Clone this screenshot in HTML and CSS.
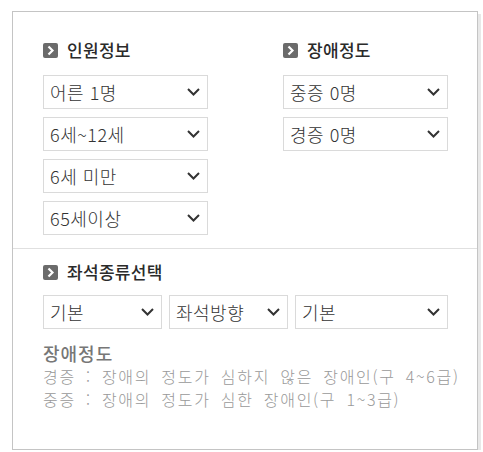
FILE: index.html
```html
<!DOCTYPE html>
<html lang="ko">
<head>
<meta charset="utf-8">
<link rel="stylesheet" href="styles.css">
</head>
<body>
<div class="panel">
  <div class="top">
    <div class="col">
      <h3 class="heading"><span class="ico"><svg viewBox="0 0 15 15" width="15" height="15"><path d="M5.5 3.5 L9.5 7.5 L5.5 11.5" fill="none" stroke="#fff" stroke-width="2.2"/></svg></span>인원정보</h3>
      <div class="sel"><span>어른 1명</span><svg class="chev" viewBox="0 0 13 8" width="13" height="8"><path d="M1 1 L6.5 6.5 L12 1" fill="none" stroke="#333" stroke-width="2"/></svg></div>
      <div class="sel"><span>6세~12세</span><svg class="chev" viewBox="0 0 13 8" width="13" height="8"><path d="M1 1 L6.5 6.5 L12 1" fill="none" stroke="#333" stroke-width="2"/></svg></div>
      <div class="sel"><span>6세 미만</span><svg class="chev" viewBox="0 0 13 8" width="13" height="8"><path d="M1 1 L6.5 6.5 L12 1" fill="none" stroke="#333" stroke-width="2"/></svg></div>
      <div class="sel"><span>65세이상</span><svg class="chev" viewBox="0 0 13 8" width="13" height="8"><path d="M1 1 L6.5 6.5 L12 1" fill="none" stroke="#333" stroke-width="2"/></svg></div>
    </div>
    <div class="col">
      <h3 class="heading"><span class="ico"><svg viewBox="0 0 15 15" width="15" height="15"><path d="M5.5 3.5 L9.5 7.5 L5.5 11.5" fill="none" stroke="#fff" stroke-width="2.2"/></svg></span>장애정도</h3>
      <div class="sel"><span>중증 0명</span><svg class="chev" viewBox="0 0 13 8" width="13" height="8"><path d="M1 1 L6.5 6.5 L12 1" fill="none" stroke="#333" stroke-width="2"/></svg></div>
      <div class="sel"><span>경증 0명</span><svg class="chev" viewBox="0 0 13 8" width="13" height="8"><path d="M1 1 L6.5 6.5 L12 1" fill="none" stroke="#333" stroke-width="2"/></svg></div>
    </div>
  </div>
  <div class="bottom">
    <h3 class="heading"><span class="ico"><svg viewBox="0 0 15 15" width="15" height="15"><path d="M5.5 3.5 L9.5 7.5 L5.5 11.5" fill="none" stroke="#fff" stroke-width="2.2"/></svg></span>좌석종류선택</h3>
    <div class="row">
      <div class="sel w119"><span>기본</span><svg class="chev" viewBox="0 0 13 8" width="13" height="8"><path d="M1 1 L6.5 6.5 L12 1" fill="none" stroke="#333" stroke-width="2"/></svg></div>
      <div class="sel w119"><span>좌석방향</span><svg class="chev" viewBox="0 0 13 8" width="13" height="8"><path d="M1 1 L6.5 6.5 L12 1" fill="none" stroke="#333" stroke-width="2"/></svg></div>
      <div class="sel w153"><span>기본</span><svg class="chev" viewBox="0 0 13 8" width="13" height="8"><path d="M1 1 L6.5 6.5 L12 1" fill="none" stroke="#333" stroke-width="2"/></svg></div>
    </div>
    <div class="info">
      <p class="info-title">장애정도</p>
      <p class="info-line">경증 : 장애의 정도가 심하지 않은 장애인(구 4~6급)</p>
      <p class="info-line">중증 : 장애의 정도가 심한 장애인(구 1~3급)</p>
    </div>
  </div>
</div>
</body>
</html>
```

FILE: styles.css
```css
* { box-sizing: border-box; }
html, body { margin: 0; padding: 0; background: #fff; }
body { font-family: "Noto Sans CJK KR", "Noto Sans", sans-serif; }

.panel {
  margin: 11px 0 0 12px;
  width: 466px;
  height: 439px;
  border: 1px solid #c4c4c4;
  background: #fff;
  box-shadow: 3px 3px 0 #e8e8e8;
}

.top {
  display: flex;
  gap: 75px;
  padding: 28px 0 0 30px;
  height: 237px;
  border-bottom: 1px solid #e0e0e0;
}

.col {
  width: 165px;
  display: flex;
  flex-direction: column;
  gap: 8px;
}

.heading {
  margin: 0;
  height: 20px;
  display: flex;
  align-items: center;
  gap: 9px;
  font-size: 17px;
  font-weight: 500;
  letter-spacing: 0.3px;
  color: #2a2a2a;
  line-height: 20px;
}
.col .heading { margin-bottom: 7px; }

.ico {
  width: 15px;
  height: 15px;
  background: #6b6b6b;
  border-radius: 2px;
  display: inline-flex;
}
.ico svg { display: block; }

.sel {
  height: 34px;
  border: 1px solid #dadada;
  background: #fff;
  display: flex;
  align-items: center;
  justify-content: space-between;
  padding: 0 7px 0 6px;
  font-size: 18px;
  font-weight: 300;
  letter-spacing: 0.5px;
  color: #333;
}
.sel span { line-height: 1; }
.chev { display: block; }

.bottom {
  padding: 13px 0 0 30px;
}
.bottom .heading { margin-bottom: 13px; }

.row {
  display: flex;
  gap: 7px;
}
.w119 { width: 119px; }
.w153 { width: 153px; }

.info { margin-top: 12px; }
.info p { margin: 0; }
.info-title {
  font-size: 18px;
  font-weight: 500;
  letter-spacing: 1px;
  color: #777;
  line-height: 24px;
  margin-bottom: 2px;
}
.info-line {
  font-size: 16px;
  font-weight: 300;
  color: #999;
  line-height: 23px;
  letter-spacing: 1.7px;
  word-spacing: 4px;
}
```
